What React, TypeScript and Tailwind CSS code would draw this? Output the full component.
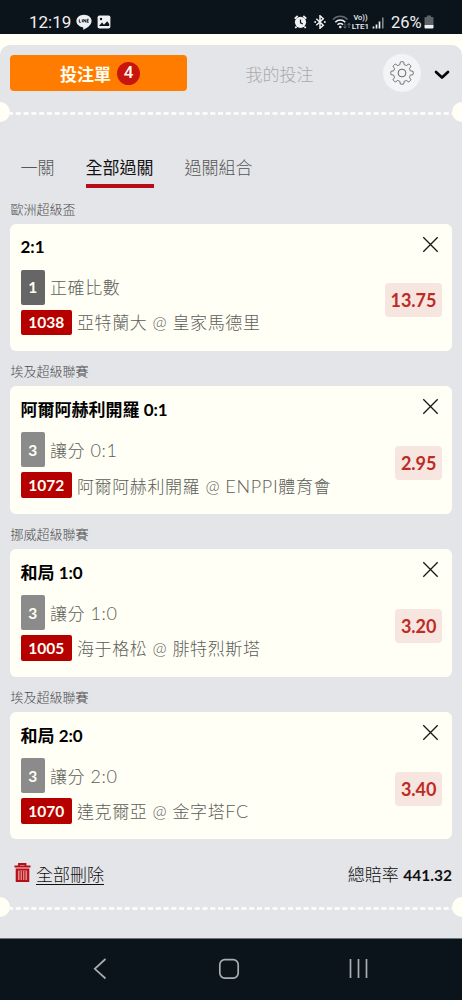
import React from "react";

type Bet = {
  league: string;
  title: string;
  count: string;
  dark?: boolean;
  kind: string;
  code: string;
  match: string;
  odds: string;
};

const bets: Bet[] = [
  { league: "歐洲超級盃", title: "2:1", count: "1", dark: true, kind: "正確比數", code: "1038", match: "亞特蘭大 @ 皇家馬德里", odds: "13.75" },
  { league: "埃及超級聯賽", title: "阿爾阿赫利開羅 0:1", count: "3", kind: "讓分 0:1", code: "1072", match: "阿爾阿赫利開羅 @ ENPPI體育會", odds: "2.95" },
  { league: "挪威超級聯賽", title: "和局 1:0", count: "3", kind: "讓分 1:0", code: "1005", match: "海于格松 @ 腓特烈斯塔", odds: "3.20" },
  { league: "埃及超級聯賽", title: "和局 2:0", count: "3", kind: "讓分 2:0", code: "1070", match: "達克爾亞 @ 金字塔FC", odds: "3.40" },
];

function StatusBar() {
  return (
    <div className="flex h-[34px] items-end bg-[#0b131b] pl-[29px] pr-[28px] font-['Roboto','Noto_Sans_CJK_TC',sans-serif] text-[#eef0f1]">
      <span className="mb-px w-[41px] whitespace-nowrap text-[17px] leading-[22px]">12:19</span>
      <svg className="mb-[4px] ml-[6px]" width="16" height="16" viewBox="0 0 16 16">
        <path d="M8 .7C3.700.7.4 3.500.4 7c0 3.100 2.700 5.600 6.300 6.200.8.200.6.600.4 2.100 0 .4.300.5.700.3C10.300 14.200 15.600 11.300 15.600 7 15.600 3.500 12.300.7 8 .7z" fill="#eef0f1" />
        <path d="M3.300 5.300v3h1.500M6.300 5.300v3M7.800 8.300v-3l2 3v-3M12.700 5.300h-1.500v3h1.500M11.200 6.800h1.300" fill="none" stroke="#0b131b" strokeWidth=".9" />
      </svg>
      <svg className="mb-[5px] ml-[5px]" width="14" height="14" viewBox="0 0 14 14">
        <rect x=".6" y=".5" width="12.800" height="13" rx="1.800" fill="#eef0f1" />
        <path d="M2 11 5 7.500l2 2.200 3.200-3.500 2 2.800v2z" fill="#0b131b" />
        <circle cx="4" cy="4" r="1.200" fill="#0b131b" />
      </svg>
      <div className="flex-1" />
      <svg className="mb-[5px]" width="13" height="14" viewBox="0 0 13 14">
        <circle cx="6.500" cy="7.300" r="5.600" fill="#eef0f1" />
        <path d="M.7 3.600 3.700 1M12.300 3.600 9.300 1M2.500 11.700 1.300 13M10.500 11.700l1.200 1.300" stroke="#eef0f1" strokeWidth="1.800" />
        <path d="M6.500 4.500v3.300l2.300 1.200" fill="none" stroke="#0b131b" strokeWidth="1.200" />
      </svg>
      <svg className="mb-[5px] ml-[7px]" width="12" height="14" viewBox="0 0 12 14">
        <path d="m2.300 3.800 7 6.400L6 13.200V.8l3.300 3-7 6.400" fill="none" stroke="#eef0f1" strokeWidth="1.500" />
        <circle cx="1.200" cy="7" r="1" fill="#eef0f1" />
        <circle cx="10.800" cy="7" r="1" fill="#eef0f1" />
      </svg>
      <svg className="mb-[5px] ml-[6px]" width="20" height="14" viewBox="0 0 20 14">
        <path d="M1 4.500C5 .3 11.500.3 15.500 4.500" fill="none" stroke="#626970" strokeWidth="1.500" />
        <path d="M3.300 7.200c2.800-2.900 7.200-2.900 10 0M5.500 9.800c1.500-1.600 4-1.600 5.500 0" fill="none" stroke="#eef0f1" strokeWidth="1.500" />
        <circle cx="8.300" cy="12" r="1.300" fill="#eef0f1" />
        <path d="M13 8.500v4.500m-1.500-1.500 1.500 1.700 1.500-1.700M17 13V8.500m-1.500 1.500L17 8.300l1.500 1.700" fill="none" stroke="#6b7177" strokeWidth=".9" />
      </svg>
      <div className="mb-[3px] flex w-[17px] flex-col items-center font-medium">
        <span className="whitespace-nowrap text-[7.500px] leading-[8.500px]">Vo))</span>
        <span className="whitespace-nowrap text-[8px] leading-[8.500px]">LTE1</span>
      </div>
      <svg className="mb-[5px] ml-[3px]" width="13" height="12" viewBox="0 0 13 12">
        <path d="M1.500 11.500v-2M4.500 11.500v-4M7.500 11.500v-7" stroke="#eef0f1" strokeWidth="1.700" />
        <path d="M10.800 11.500v-11" stroke="#8b9196" strokeWidth="1.500" />
      </svg>
      <span className="ml-[6px] w-[31px] whitespace-nowrap text-[16.500px] leading-[22px]">26%</span>
      <svg className="mb-[5px] ml-[2px]" width="10" height="14" viewBox="0 0 10 14">
        <path d="M3 .5h4v1.500h1.500Q9.500 2 9.500 3v7H.5V3q0-1 1-1H3z" fill="#5d6369" />
        <path d="M.5 10h9v2.500q0 1-1 1h-7q-1 0-1-1z" fill="#eef0f1" />
      </svg>
    </div>
  );
}

function Perforation() {
  return (
    <div className="flex h-[20px] shrink-0 items-center overflow-hidden">
      <div className="-ml-[10px] size-[20px] shrink-0 rounded-full bg-[#fffff5]" />
      <svg className="mt-[3px] h-[3px] min-w-0 flex-1" height="3">
        <line x1="-2" y1="1.500" x2="100%" y2="1.500" stroke="#fffffa" strokeWidth="2.500" strokeDasharray="5 2.780" />
      </svg>
      <div className="-mr-[10px] size-[20px] shrink-0 rounded-full bg-[#fffff5]" />
    </div>
  );
}

function gearPath() {
  const pts: string[] = [];
  const n = 160;
  for (let i = 0; i < n; i++) {
    const a = (i / n) * Math.PI * 2;
    const r = 9.9 + 1.4 * Math.tanh(3 * Math.cos(8 * a));
    pts.push(`${(12 + r * Math.sin(a)).toFixed(2)} ${(12 - r * Math.cos(a)).toFixed(2)}`);
  }
  return `M${pts.join("L")}Z`;
}

function Header() {
  return (
    <div className="flex h-[57px] items-center pl-[10px] pr-[12px]">
      <button className="-mt-px flex h-[36px] w-[177px] items-center justify-center gap-[6px] rounded-[4px] bg-[#ff7c00] pl-[3px] text-[17px] font-bold text-[#fffdf0]">
        <span className="pt-[3px] leading-[24px]">投注單</span>
        <span className="flex size-[23px] items-center justify-center rounded-full bg-[#c8150d] font-['Roboto',sans-serif] text-[17px] font-medium">4</span>
      </button>
      <button className="w-[185px] pt-[2px] text-center text-[17px] font-light text-[#a9aaab]">我的投注</button>
      <button className="-mt-px ml-[11px] flex size-[38px] items-center justify-center rounded-full bg-[#f3f4f6]">
        <svg width="24" height="24" viewBox="0 0 24 24" fill="none" stroke="#555" strokeWidth=".9">
          <path d={gearPath()} />
          <circle cx="12" cy="12" r="3.900" />
        </svg>
      </button>
      <svg className="ml-[13px] mt-[2px] shrink-0" width="16" height="10" viewBox="0 0 16 10">
        <path d="m2 2 6 5.500L14 2" fill="none" stroke="#050505" strokeWidth="2.700" strokeLinecap="round" strokeLinejoin="round" />
      </svg>
    </div>
  );
}

function Tabs() {
  return (
    <div className="mt-[32px] flex h-[34px] gap-[31px] pl-[20.500px] text-[17px] font-light leading-[28px] text-[#555657]">
      <span>一關</span>
      <span className="border-b-4 border-[#b80d18] font-normal text-[#111]">全部過關</span>
      <span>過關組合</span>
    </div>
  );
}

function Detail({ text }: { text: string }) {
  return (
    <span className="whitespace-nowrap pt-[2px] text-[17px] font-light leading-[24px] tracking-[.6px] text-[#5c5c59]">
      {text.split(/([A-Z]+|\d:\d)/).map((part, i) =>
        i % 2 ? (
          <span key={i} className="text-[18px] tracking-[.7px]">{part}</span>
        ) : (
          part
        ),
      )}
    </span>
  );
}

function BetCard({ bet }: { bet: Bet }) {
  return (
    <section className="mx-[10px] h-[162.900px]">
      <h2 className="h-[27.500px] pl-[.5px] pt-[2.500px] text-[13px] font-light leading-[20px] text-[#4b4c4e]">{bet.league}</h2>
      <div className="flex h-[127.300px] justify-between rounded-[6px] bg-[#fffff5] pl-[10.500px] pr-[10px]">
        <div>
          <div className="mt-[11.500px] h-[24px] whitespace-nowrap text-[17px] font-bold leading-[24px] text-black">{bet.title}</div>
          <div className="mt-[10.500px] flex h-[35px] items-center gap-[5px]">
            <span className={`flex h-[35px] w-[24.500px] items-center justify-center rounded-[2px] pt-px text-[15.500px] font-bold text-[#fffff5] ${bet.dark ? "bg-[#666]" : "bg-[#8b8b8b]"}`}>{bet.count}</span>
            <Detail text={bet.kind} />
          </div>
          <div className="mt-[5px] flex h-[25.500px] items-center gap-[5px]">
            <span className="flex h-[25.500px] w-[51.500px] items-center justify-center rounded-[2px] bg-[#b60000] pt-px text-[15.500px] font-bold text-[#fffff5]">{bet.code}</span>
            <Detail text={bet.match} />
          </div>
        </div>
        <div className="flex flex-col items-end">
          <svg className="mr-[3px] mt-[12px]" width="17" height="17" viewBox="0 0 17 17">
            <path d="m1.300 1.300 14.400 14.400m0-14.400L1.300 15.700" stroke="#171714" strokeWidth="1.300" />
          </svg>
          <span className="mt-[30.500px] flex h-[34px] items-center rounded-[4px] bg-[#f7e5e0] px-[5.500px] pt-px text-[18px] font-bold text-[#bd2b25]">{bet.odds}</span>
        </div>
      </div>
    </section>
  );
}

function Summary() {
  return (
    <div className="flex h-[49px] items-center pl-[14px] pr-[10px] pt-[4px] text-[17px] leading-[24px] text-[#111]">
      <svg className="mb-[2px]" width="17" height="20" viewBox="0 0 17 20">
        <path d="M.5 3.500h16M5 3V1h6.500v2" fill="none" stroke="#b80d14" strokeWidth="1.800" />
        <path d="M2.800 6.500h11.400V18H2.800z" fill="#df8585" stroke="#b80d14" strokeWidth="2.200" />
        <path d="M6.100 8v9M8.500 8v9M10.900 8v9" stroke="#b80d14" strokeWidth="1" />
      </svg>
      <button className="ml-[5px] pt-px font-light underline decoration-1 underline-offset-[3px]">全部刪除</button>
      <span className="ml-auto pt-px font-light">總賠率 <b className="text-[15.500px] font-bold">441.32</b></span>
    </div>
  );
}

function NavBar() {
  return (
    <nav className="flex h-[62px] items-start border-t border-[#6e777c] bg-[#0b131b]">
      <svg width="462" height="60" viewBox="0 0 462 60" fill="none" stroke="#a9aeb2" strokeWidth="1.700">
        <path d="m105.500 20-10.700 9.800 10.700 9.700" />
        <rect x="219.800" y="20.700" width="18.400" height="18.400" rx="5" />
        <path d="M350.500 20v19M358.500 20v19M366.500 20v19" />
      </svg>
    </nav>
  );
}

export default function App() {
  return (
    <div className="flex h-[1000px] w-[462px] flex-col overflow-hidden bg-[#fffff5] font-['Lato','Noto_Sans_CJK_TC',sans-serif]">
      <StatusBar />
      <main className="mt-[11px] flex flex-1 flex-col rounded-t-[10px] bg-[#e4e5e8]">
        <Header />
        <Perforation />
        <Tabs />
        <div className="mt-[8px]">
          {bets.map((bet, i) => (
            <BetCard key={i} bet={bet} />
          ))}
        </div>
        <Summary />
        <Perforation />
      </main>
      <NavBar />
    </div>
  );
}
